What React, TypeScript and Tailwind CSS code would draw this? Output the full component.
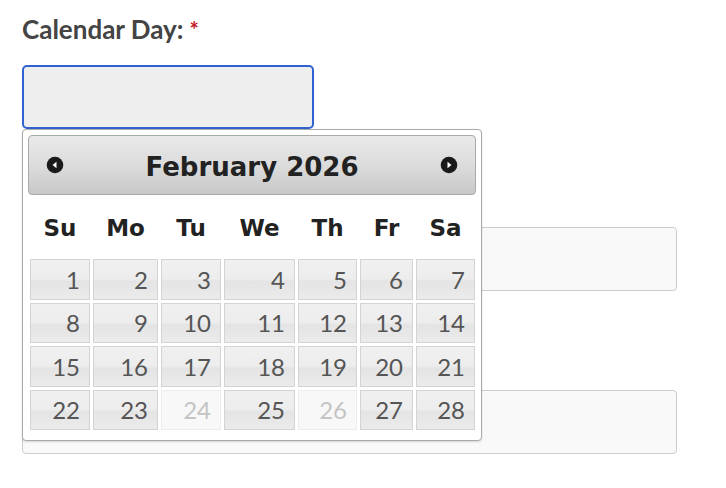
import React from "react";

const names = ["Su", "Mo", "Tu", "We", "Th", "Fr", "Sa"];
const weeks = [
  [1, 2, 3, 4, 5, 6, 7],
  [8, 9, 10, 11, 12, 13, 14],
  [15, 16, 17, 18, 19, 20, 21],
  [22, 23, 24, 25, 26, 27, 28],
];
const disabled = new Set([24, 26]);

function Arrow({ dir }: { dir: "l" | "r" }) {
  return (
    <svg width="18" height="18" viewBox="0 0 18 18">
      <circle cx="9" cy="9" r="8.3" fill="#1a1a1a" />
      {dir === "l" ? (
        <path d="M6.5 9 L10.5 5.8 L10.5 12.2 Z" fill="#fff" />
      ) : (
        <path d="M11.5 9 L7.5 5.8 L7.5 12.2 Z" fill="#fff" />
      )}
    </svg>
  );
}

export default function App() {
  return (
    <div className="relative w-[726px] h-[488px] bg-white overflow-hidden font-['Lato','Noto_Sans',sans-serif]">
      <div className="flex flex-col pl-[22px] pt-[14px]">
        <div className="flex items-start h-[30px] text-[26px] leading-[30px] font-bold text-[#444]">
          <span>Calendar Day:</span>
          <span className="ml-[6px] mt-[3px] text-[#c4161c] text-[22px] leading-[26px]">*</span>
        </div>
        <div className="mt-[21px] w-[292px] h-[64px] rounded-[5px] border-2 border-[#2d62d0] bg-[#eeeeee]" />
        <div className="mt-[98px] w-[655px] h-[64px] rounded-[4px] border border-[#cccccc] bg-[#f9f9f9]" />
        <div className="mt-[99px] w-[655px] h-[64px] rounded-[4px] border border-[#cccccc] bg-[#f9f9f9]" />
      </div>

      <div className="absolute left-[22px] top-[129px] w-[460px] h-[312px] rounded-[4px] border border-[#aaaaaa] bg-white px-[5px] pt-[5px] shadow-[0_1px_2px_rgba(0,0,0,0.15)]">
        <div className="flex items-center justify-between h-[60px] rounded-[4px] border border-[#aaaaaa] bg-[linear-gradient(#e9e9e9,#dcdcdc_50%,#c8c8c8)] px-[17px]">
          <Arrow dir="l" />
          <span className="font-['DejaVu_Sans',sans-serif] font-bold text-[26px] leading-[30px] text-[#222] pt-[3px]">
            February 2026
          </span>
          <Arrow dir="r" />
        </div>
        <div className="ml-[2px] mt-[2px] grid grid-cols-[60px_65px_60px_71px_59px_53px_59px] gap-x-[3px]">
          {names.map((n) => (
            <div
              key={n}
              className="h-[62px] flex items-center justify-center font-['DejaVu_Sans',sans-serif] font-bold text-[23px] text-[#222]"
            >
              {n}
            </div>
          ))}
        </div>
        <div className="ml-[2px] grid grid-cols-[60px_65px_60px_71px_59px_53px_59px] grid-rows-[41px_40px_41px_40px] gap-[3px]">
          {weeks.flat().map((d) =>
            disabled.has(d) ? (
              <div
                key={d}
                className="flex items-center justify-end pr-[9px] border border-[#ececec] bg-[#f8f8f8] text-[24px] text-[#c4c4c4]"
              >
                {d}
              </div>
            ) : (
              <div
                key={d}
                className="flex items-center justify-end pr-[9px] border border-[#d3d3d3] bg-[linear-gradient(#f0f0f0,#ededed_48%,#e4e4e4_55%,#ebebeb)] text-[24px] text-[#555]"
              >
                {d}
              </div>
            )
          )}
        </div>
      </div>
    </div>
  );
}
